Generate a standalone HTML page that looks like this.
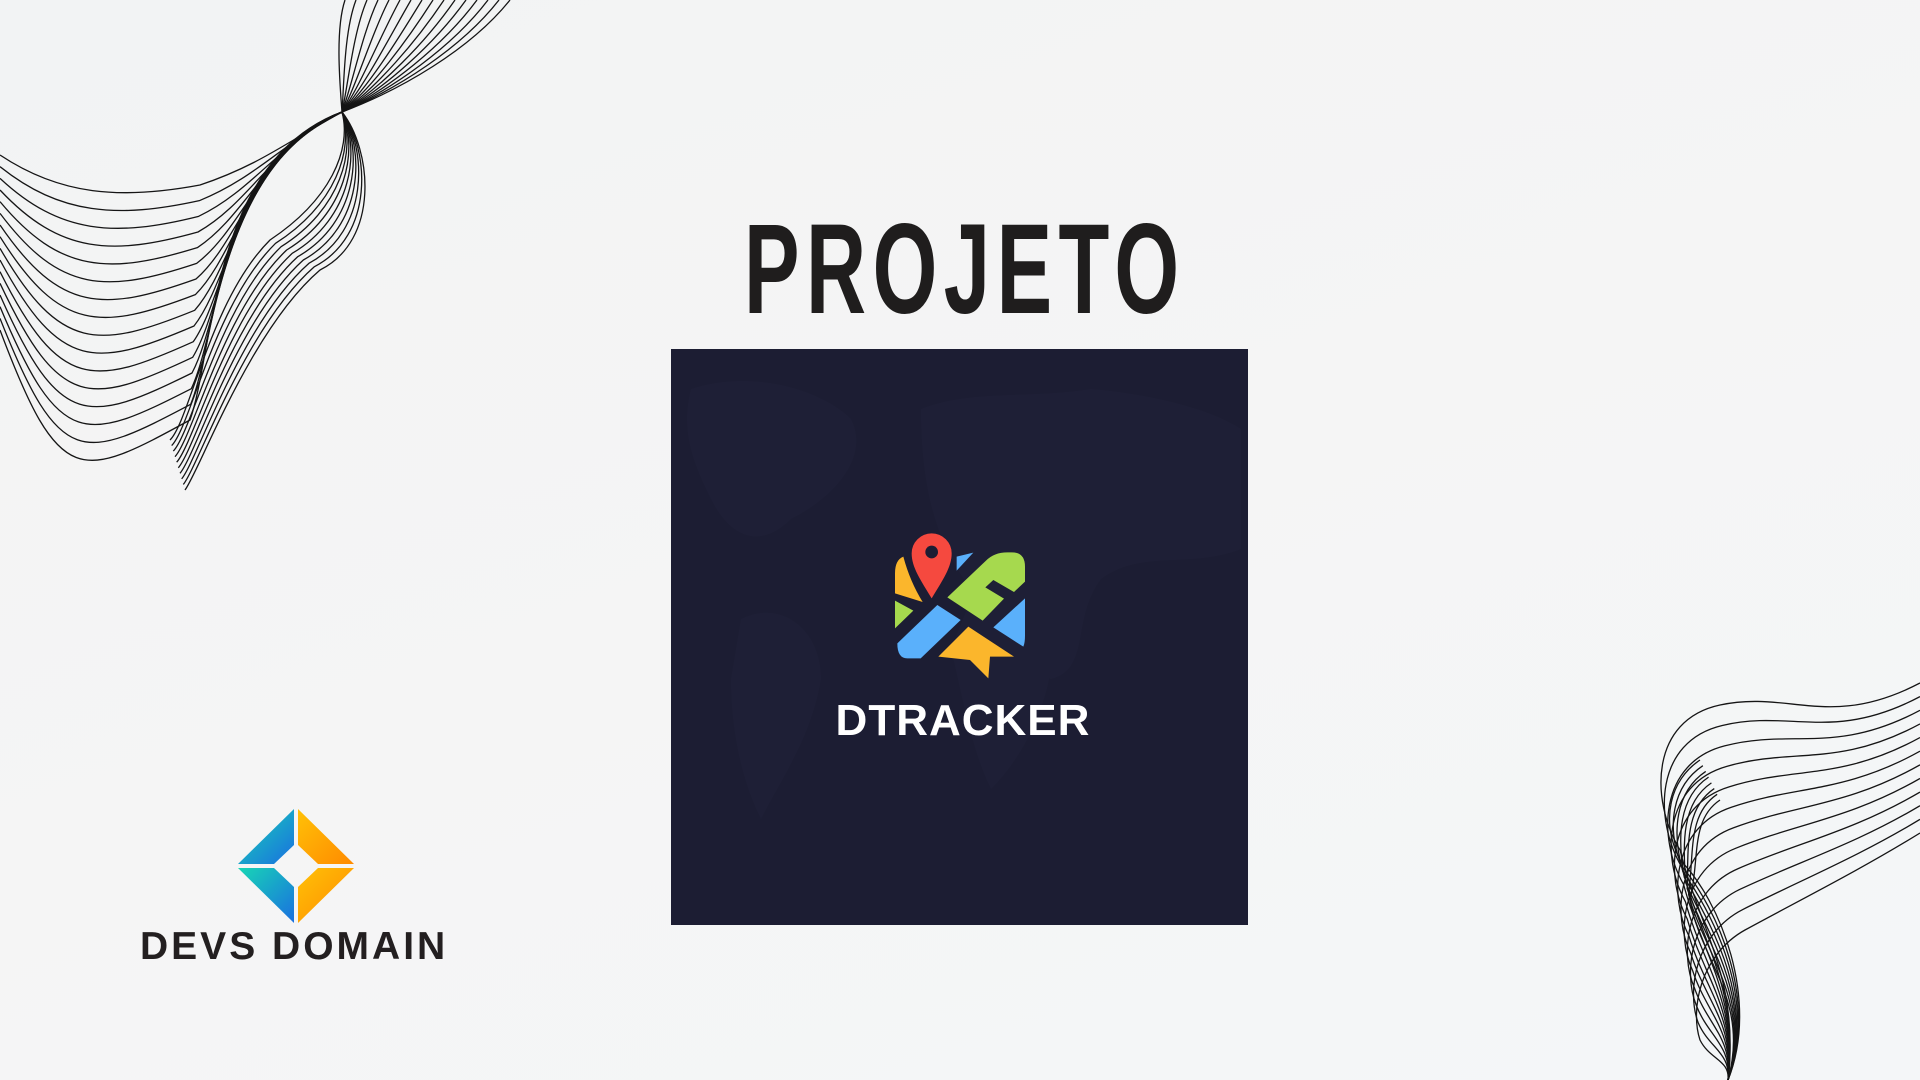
<!DOCTYPE html>
<html><head><meta charset="utf-8"><style>
html,body{margin:0;padding:0}
body{width:1920px;height:1080px;position:relative;overflow:hidden;background:linear-gradient(160deg,#f2f3f4 0%,#f5f5f5 50%,#f4f6f8 100%);font-family:"Liberation Sans",sans-serif}
#title{position:absolute;left:744px;top:206px;font-family:"Liberation Sans",sans-serif;font-weight:700;font-size:128px;line-height:128px;letter-spacing:10px;color:#1f1d1d;transform:scaleX(0.65);transform-origin:left top;white-space:nowrap}
#box{position:absolute;left:671px;top:349px;width:577px;height:576px;background:#1c1d33;overflow:hidden}
#dt{position:absolute;left:833px;top:696px;width:260px;text-align:center;font-weight:700;font-size:44px;color:#fff;letter-spacing:1px}
#dd{position:absolute;left:140px;top:925px;font-weight:700;font-size:39px;color:#231f20;letter-spacing:3px;white-space:nowrap}
svg{position:absolute}
</style></head><body>
<svg id="waves" width="1920" height="1080" style="left:0;top:0"></svg>
<div id="title">PROJETO</div>
<div id="box">
<svg width="577" height="576" style="left:0;top:0;opacity:.18">
<g fill="#2a2c44">
<path d="M20,40 C80,20 150,40 180,70 C200,110 160,150 120,170 C90,200 60,190 40,150 C20,110 10,80 20,40Z"/>
<path d="M70,270 C110,250 150,280 150,330 C140,390 110,430 90,470 C70,430 60,380 60,330Z"/>
<path d="M250,60 C300,40 360,50 420,40 C480,45 540,60 570,80 L570,200 C520,220 470,200 430,230 C400,270 420,320 380,330 C340,320 320,270 300,240 C270,200 250,150 250,60Z"/>
<path d="M300,250 C340,240 380,270 380,320 C370,380 340,420 320,440 C300,400 290,340 280,300Z"/>
</g></svg>
</div>
<svg width="240" height="240" viewBox="0 0 720 720" style="left:860px;top:510px">
<path d="M130,140 Q105,150 105,190 L105,250 L188,276 Q150,215 130,140Z" fill="#fbb62c"/>
<path d="M290,140 L340,128 L290,182Z" fill="#5ab0fb"/>
<path d="M262,262 L378,152 Q402,127 442,127 L455,127 Q495,127 495,170 L495,215 L462,246 L400,210 L376,232 L432,266 L368,332Z" fill="#a6d94e"/>
<path d="M105,272 L160,302 L105,355Z" fill="#a6d94e"/>
<path d="M112,400 L232,285 L302,330 L182,445 L142,445 Q112,445 112,400Z" fill="#5ab0fb"/>
<path d="M495,265 L400,352 L490,410 Q495,398 495,378Z" fill="#5ab0fb"/>
<path d="M235,440 L325,350 L462,440 L390,440 L385,505 L330,450Z" fill="#fbb62c"/>
<path d="M215,265 C182,210 155,172 155,130 A60,60 0 1 1 275,130 C275,172 248,210 215,265Z" fill="#f5493f"/>
<circle cx="215" cy="126" r="19" fill="#1c1d33"/>
</svg>
<div id="dt">DTRACKER</div>
<svg width="120" height="118" viewBox="0 0 120 118" style="left:236px;top:807px">
<defs>
<linearGradient id="b" x1="0" y1="0" x2="1" y2="1"><stop offset="0" stop-color="#17d6b5"/><stop offset="1" stop-color="#1a6fe0"/></linearGradient>
<linearGradient id="o" x1="0" y1="0" x2="1" y2="1"><stop offset="0" stop-color="#ffc107"/><stop offset="1" stop-color="#ff8a00"/></linearGradient>
</defs>
<path d="M58,2 L58,38 L38,57 L2,57Z" fill="url(#b)"/>
<path d="M62,2 L62,38 L82,57 L118,57Z" fill="url(#o)"/>
<path d="M2,61 L38,61 L58,80 L58,116Z" fill="url(#b)"/>
<path d="M118,61 L82,61 L62,80 L62,116Z" fill="url(#o)"/>
</svg>
<div id="dd">DEVS DOMAIN</div>
<script>
var s=document.getElementById('waves'),h='';
function L(a,b,t){return a+(b-a)*t}
var N=16;
for(var i=0;i<N;i++){var t=i/(N-1);
var y0=155+175*t,Mx=200-10*t,My=185+235*t;
var d='M0,'+y0+' C60,'+(y0+40+120*t)+' '+(120-40*t)+','+(200+280*t)+' '+Mx+','+My+
' C'+(Mx+60-35*t)+','+(My-20-50*t)+' '+(290-80*t)+','+(140+20*t)+' 342,112'+
' C'+(340+60*t)+','+(85+5*t)+' '+(335+135*t)+','+(30+20*t)+' '+(345+165*t)+',0';
h+='<path d="'+d+'"/>';}
for(var i=0;i<10;i++){var t=i/9;
var d='M342,112 C'+L(372,352,t)+',150 '+L(380,330,t)+','+L(240,200,t)+' '+L(320,270,t)+','+L(270,240,t)+
' C'+L(250,210,t)+','+L(330,300,t)+' '+L(200,190,t)+','+L(470,420,t)+' '+L(185,170,t)+','+L(490,440,t);
h+='<path d="'+d+'"/>';}
var P=1728;
for(var i=0;i<12;i++){var t=i/11;
var d='M1920,'+L(683,833,t)+' C'+L(1830,1860,t)+','+L(730,870,t)+' '+L(1790,1800,t)+','+L(690,900,t)+' '+L(1720,1745,t)+','+L(705,930,t)+
' C'+L(1650,1700,t)+','+L(720,955,t)+' '+L(1650,1690,t)+','+L(800,1010,t)+' '+L(1680,1700,t)+','+L(850,1040,t)+
' C'+L(1700,1710,t)+','+L(930,1060,t)+' '+L(1740,1730,t)+','+L(980,1060,t)+' '+P+',1080';
h+='<path d="'+d+'"/>';}
for(var i=0;i<8;i++){var t=i/7;
var d='M'+P+',1080 C'+L(1760,1750,t)+',1000 '+L(1720,1700,t)+','+L(900,960,t)+' '+L(1680,1690,t)+','+L(860,900,t)+
' C'+L(1660,1700,t)+','+L(820,860,t)+' '+L(1670,1690,t)+','+L(780,820,t)+' '+L(1700,1720,t)+','+L(760,800,t);
h+='<path d="'+d+'"/>';}
s.innerHTML='<g fill="none" stroke="#151515" stroke-width="1.3">'+h+'</g>';
</script>
</body></html>
